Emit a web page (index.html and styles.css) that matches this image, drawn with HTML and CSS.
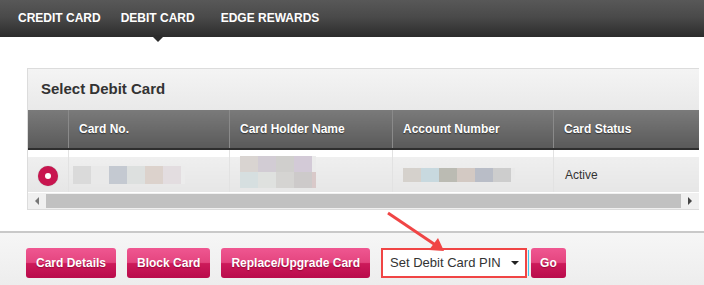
FILE: index.html
```html
<!DOCTYPE html>
<html lang="en">
<head>
    <meta charset="UTF-8">
    <title>Debit Card</title>
    <link rel="stylesheet" href="styles.css">
</head>
<body>
    <div class="topnav">
        <a class="tab">CREDIT CARD</a>
        <a class="tab active">DEBIT CARD</a>
        <a class="tab">EDGE REWARDS</a>
    </div>

    <div class="content">
        <div class="panel">
            <div class="panel-title">Select Debit Card</div>
            <table class="cards">
                <thead>
                    <tr>
                        <th class="col-radio"></th>
                        <th class="col-no">Card No.</th>
                        <th class="col-name">Card Holder Name</th>
                        <th class="col-acc">Account Number</th>
                        <th class="col-status">Card Status</th>
                    </tr>
                </thead>
                <tbody>
                    <tr>
                        <td><span class="radio"></span></td>
                        <td>
                            <div class="blur">
                                <i style="background:#dadada"></i><i style="background:#e9e9e9"></i><i style="background:#c4c9d1"></i><i style="background:#dde0df"></i><i style="background:#dcd2cc"></i><i style="background:#e3dde0"></i><i class="half" style="background:#ececec"></i>
                            </div>
                        </td>
                        <td>
                            <div class="blur two">
                                <i style="background:#d9d4d1"></i><i style="background:#d2ccd4"></i><i style="background:#d0cfcd"></i><i style="background:#d3cad7"></i><i class="half" style="background:#ebebeb"></i>
                                <i style="background:#d6dfe0"></i><i style="background:#dfe1df"></i><i style="background:#d5d4d2"></i><i style="background:#cdcaca"></i><i class="half" style="background:#d9c9c9"></i>
                            </div>
                        </td>
                        <td>
                            <div class="blur acc">
                                <i style="background:#d5d1cc"></i><i style="background:#c8d9df"></i><i style="background:#bbbbb3"></i><i style="background:#d3c9c3"></i><i style="background:#b9bdc7"></i><i style="background:#cdcdcd"></i><i class="half" style="background:#e9e9e9"></i>
                            </div>
                        </td>
                        <td class="status">Active</td>
                    </tr>
                </tbody>
            </table>
            <div class="hscroll">
                <span class="sbtn left"></span>
                <span class="track"></span>
                <span class="sbtn right"></span>
            </div>
        </div>
    </div>

    <div class="actions">
        <button class="btn">Card Details</button>
        <button class="btn">Block Card</button>
        <button class="btn">Replace/Upgrade Card</button>
        <div class="select-wrap">
            <div class="select">Set Debit Card PIN<span class="caret"></span></div>
        </div>
        <button class="btn go">Go</button>
    </div>

    <svg class="pointer" width="70" height="50" viewBox="0 0 70 50">
        <line x1="3" y1="3" x2="52" y2="36" stroke="#f04545" stroke-width="3"/>
        <polygon points="59,41 44,40 53,28" fill="#f04545"/>
    </svg>
</body>
</html>
```

FILE: styles.css
```css
body {
    margin: 0;
    font-family: "Liberation Sans", Arial, sans-serif;
    background: #fff;
    width: 704px;
    height: 285px;
    overflow: hidden;
    position: relative;
}

.topnav {
    height: 37px;
    background: linear-gradient(to bottom, #585858 0%, #4a4a4a 45%, #2c2c2c 100%);
    display: flex;
    align-items: center;
    padding-left: 18px;
    gap: 20px;
}

.tab {
    color: #fff;
    font-size: 12px;
    font-weight: bold;
    position: relative;
    padding-bottom: 1px;
}

.tab.active {
    margin-right: 6px;
}

.tab.active:after {
    content: "";
    position: absolute;
    left: 50%;
    margin-left: -7px;
    top: 24px;
    border-left: 7px solid transparent;
    border-right: 7px solid transparent;
    border-top: 7px solid #2c2c2c;
}

.content {
    padding: 31px 0 0 27px;
}

.panel {
    width: 671px;
    border: 1px solid #dcdcdc;
    border-right: none;
    background: #fff;
}

.panel-title {
    height: 41px;
    line-height: 40px;
    padding-left: 13px;
    font-size: 15px;
    font-weight: bold;
    color: #333;
    background: linear-gradient(to bottom, #f4f4f4, #e9e9e9);
}

.cards {
    border-collapse: collapse;
    table-layout: fixed;
    width: 671px;
}

.cards th {
    height: 38px;
    padding: 0 0 0 10px;
    text-align: left;
    color: #fff;
    font-size: 12px;
    font-weight: bold;
    text-shadow: 0 1px 1px #333;
    background: linear-gradient(to bottom, #7a7a7a, #5a5a5a);
    border-left: 1px solid #8a8a8a;
    border-bottom: 2px solid #2e2e2e;
}

.cards th:first-child {
    border-left: none;
}

.col-radio { width: 30px; }
.col-no { width: 150px; }
.col-name { width: 152px; }
.col-acc { width: 150px; }

.cards td {
    height: 43px;
    padding: 8px 0 0 4px;
    box-sizing: border-box;
    border-left: 1px solid #e2e2e2;
    background: linear-gradient(to bottom, #fff 0, #fff 7px, #efefef 7px, #e6e6e6 100%);
    vertical-align: middle;
    font-size: 12px;
    color: #333;
}

.cards td:first-child {
    border-left: none;
    padding-left: 0;
    text-align: center;
}

.cards td.status {
    padding-left: 11px;
}

.radio {
    display: inline-block;
    width: 20px;
    height: 20px;
    border-radius: 50%;
    background: #c8154f;
    box-shadow: 0 0 1px #999;
    position: relative;
    top: 2px;
}

.radio:after {
    content: "";
    position: absolute;
    left: 7px;
    top: 7px;
    width: 6px;
    height: 6px;
    border-radius: 50%;
    background: #fff;
}

.blur {
    display: flex;
    flex-wrap: wrap;
    width: 112px;
}

.blur i {
    display: block;
    width: 18px;
    height: 18px;
}

.blur i.half {
    width: 4px;
}

.blur.two {
    width: 82px;
    margin-left: 6px;
    margin-top: -6px;
}

.blur.two i {
    height: 16px;
}

.blur.acc {
    width: 116px;
    margin-left: 6px;
}

.blur.acc i {
    height: 14px;
}

.hscroll {
    display: flex;
    height: 16px;
    border-top: 1px solid #fff;
    background: #f0f0f0;
}

.sbtn {
    width: 18px;
    position: relative;
}

.sbtn:after {
    content: "";
    position: absolute;
    top: 4px;
    border-top: 4px solid transparent;
    border-bottom: 4px solid transparent;
}

.sbtn.left:after {
    left: 7px;
    border-right: 4px solid #777;
}

.sbtn.right:after {
    left: 7px;
    border-left: 4px solid #444;
}

.track {
    flex: 1;
    background: #c1c1c1;
    margin: 1px 0;
}

.actions {
    position: absolute;
    left: 0;
    right: 0;
    top: 231px;
    bottom: 0;
    border-top: 2px solid #c9c9c9;
    background: linear-gradient(to bottom, #f6f6f6, #ededed);
    display: flex;
    align-items: flex-start;
    padding: 15px 0 0 26px;
}

.btn {
    height: 30px;
    padding: 0 10px;
    margin-right: 11px;
    border: none;
    border-radius: 3px;
    color: #fff;
    font-family: "Liberation Sans", Arial, sans-serif;
    font-size: 12px;
    font-weight: bold;
    text-shadow: 0 1px 1px rgba(100, 0, 30, 0.5);
    background: linear-gradient(to bottom, #ef5791 0%, #e4457f 48%, #cc1a5a 52%, #b90b4b 100%);
}

.btn.go {
    margin-left: 4px;
    padding: 0 9px;
}

.select-wrap {
    height: 30px;
    border: 2px solid #f04545;
    box-sizing: border-box;
    position: relative;
}

.select-wrap:after {
    content: "";
    position: absolute;
    right: -4px;
    top: 0;
    bottom: 0;
    border-right: 1px solid #3bc6ee;
}

.select {
    width: 142px;
    height: 26px;
    line-height: 26px;
    padding-left: 7px;
    box-sizing: border-box;
    background: #fff;
    font-size: 13px;
    color: #333;
    position: relative;
}

.caret {
    position: absolute;
    right: 6px;
    top: 11px;
    border-left: 4px solid transparent;
    border-right: 4px solid transparent;
    border-top: 4px solid #222;
}

.pointer {
    position: absolute;
    left: 385px;
    top: 210px;
}
```
